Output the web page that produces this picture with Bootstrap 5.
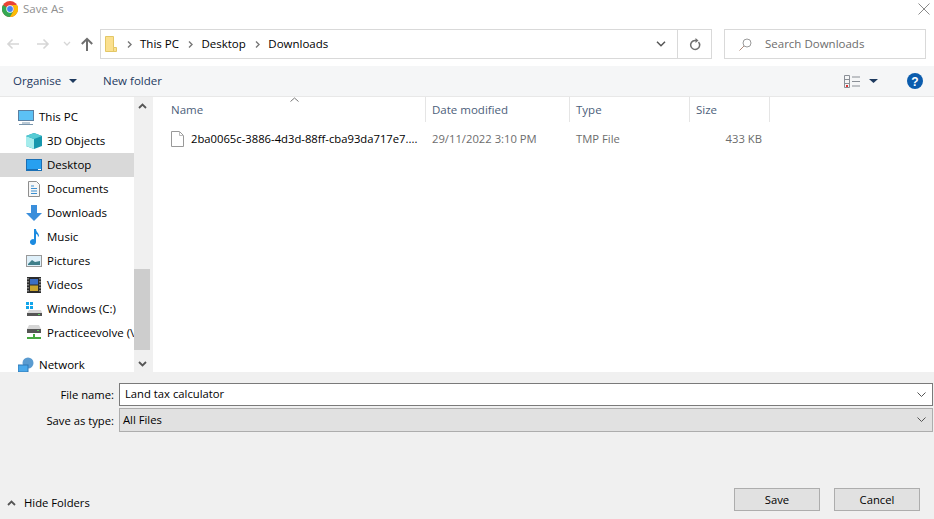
<!doctype html>
<html lang="en"><head><meta charset="utf-8"><title>Save As</title>
<link rel="stylesheet" href="https://cdn.jsdelivr.net/npm/bootstrap@5.3.0/dist/css/bootstrap.min.css">
<style>
html,body{margin:0;height:519px;overflow:hidden;background:#fff}
body{font-family:"Open Sans","Noto Sans","Liberation Sans",sans-serif;font-size:11.5px;line-height:16px;color:#000}
svg{flex:none}
.dlg{width:934px;height:519px}
.ttl{height:29px;padding:0 4px 11px 2px}
.ttl span{color:#8f8f8f;margin-left:5px}
.addr{height:37px;padding-bottom:7px}
.navbtns{width:100px;padding-left:6px}
.chev{margin:0 1px 0 5px}
.crumb{width:578px;height:30px;border:1px solid #d9d9d9;padding:0 7px 0 4px}
.crumb b{font-weight:400;margin:0 9px 0 8px;color:#000}
.crumb b+svg+b{margin-left:8.5px}
.sep1{margin-left:2px}
.helpic{margin-left:29px}
.refresh{width:34px;height:30px;border:1px solid #d9d9d9;border-left:0}
.srch{width:202px;height:30px;border:1px solid #d9d9d9;margin:0 8px 0 12px;padding-left:14px;color:#6d6d6d}
.srch span{margin-left:13px}
.tools{height:31px;background:#f5f6f7;border-bottom:1px solid #e8e8e8;padding:0 11px 0 13px;color:#1e3a5f}
.tools .org{width:90px}
.mainrow{height:275px}
.tree{width:134px;padding-top:8px;overflow:hidden;white-space:nowrap}
.titem{height:24px;padding-left:26px;gap:5px}
.titem.top{padding-left:18px}
.titem.sel{background:#d9d9d9}
.gapfill{height:8px}
.sbar{width:16px;background:#f0f0f0}
.sbtn{height:17px}
.sthumb{height:81px;background:#cdcdcd;margin-top:155px}
.vline{width:3px;background:#f0f0f0;margin-right:12px}
.cols{width:605px}
.hdr{height:25px;color:#4c607a;position:relative}
.hdr>div{padding-left:6px;border-right:1px solid #e5e5e5;height:25px;display:flex;align-items:center}
.c1{width:261px}.c2{width:144px}.c3{width:120px}.c4{width:80px}
.caret{position:absolute;left:125px;top:0}
.frow{height:24px;color:#6d6d6d;margin-top:5px;font-size:11.25px}
.frow .c1{color:#000;white-space:nowrap;overflow:hidden}
.frow>div{padding-left:6px}
.frow .c1 svg{margin-right:7px}
.frow .c4{padding:0 8px 0 0;text-align:right}
.foot{height:147px;background:#f0f0f0;padding-top:11px;font-size:11.25px}
.lab{width:115px;text-align:right;padding:0 1px 1px 0;color:#000}
.fld{width:814px;height:23px;border:1px solid #7a7a7a;background:#fff;padding:0 6px 1px 5px;margin-bottom:2px}
.fld.typ{background:#e1e1e1;border-color:#adadad;padding-left:3px;height:24px}
.bot{margin-top:54px;padding:0 14px 0 7px}
.winbtn{width:86px;height:23px;border:1px solid #adadad;background:#e1e1e1;color:#000;border-radius:0;padding:0;font-size:11.25px;line-height:16px;font-family:inherit}
.bot .gap{gap:14px}
.hide{gap:8px;padding-top:6px}
</style></head><body>
<div class="dlg d-flex flex-column">
 <div class="ttl d-flex align-items-center justify-content-between">
  <div class="d-flex align-items-center">
   <svg width="16" height="16" viewBox="0 0 16 16"><circle cx="8" cy="8" r="8" fill="#ea4335"/><path d="M8 8 1 4A8 8 0 0 0 8 16l3.500-6z" fill="#34a853"/><path d="M8 4h7a8 8 0 0 1-7 12l3.500-6A4 4 0 0 0 8 4z" fill="#fbbc05"/><circle cx="8" cy="8" r="3.700" fill="#fff"/><circle cx="8" cy="8" r="2.900" fill="#4285f4"/></svg>
   <span>Save As</span></div>
  <svg width="12" height="12" viewBox="0 0 12 12"><path d="M.5.500l11 11M11.500.500l-11 11" stroke="#8a8a8a" fill="none"/></svg>
 </div>
 <div class="addr d-flex align-items-center">
  <div class="navbtns d-flex align-items-center">
   <svg width="14" height="12" viewBox="0 0 14 12" class="me-3"><path d="M13 6H2M6.500 1.500 2 6l4.500 4.500" stroke="#d6d6d6" stroke-width="1.600" fill="none"/></svg>
   <svg width="14" height="12" viewBox="0 0 14 12" class="me-2"><path d="M1 6h11M7.500 1.500 12 6l-4.500 4.500" stroke="#d6d6d6" stroke-width="1.600" fill="none"/></svg>
   <svg width="8" height="6" viewBox="0 0 8 6" class="chev"><path d="M1 1l3 3 3-3" stroke="#d6d6d6" stroke-width="1.300" fill="none"/></svg>
   <svg width="14" height="14" viewBox="0 0 14 14" class="ms-2"><path d="M7 14V2M1.800 7 7 1.800 12.200 7" stroke="#6f6f6f" stroke-width="2" fill="none"/></svg>
  </div>
  <div class="crumb d-flex align-items-center">
   <svg width="12" height="16" viewBox="0 0 12 16" class="me-2"><path d="M.5.500h8l0 11h3v4h-11z" fill="#fbe08f" stroke="#e3c766"/><path d="M8.500 11.500v4" stroke="#e3c766"/></svg>
   <svg width="5" height="7" viewBox="0 0 5 7" class="sep1"><path d="M1 .5 4 3.500 1 6.500" stroke="#777" stroke-width="1.400" fill="none"/></svg>
   <b>This PC</b>
   <svg width="5" height="7" viewBox="0 0 5 7"><path d="M1 .5 4 3.500 1 6.500" stroke="#777" stroke-width="1.400" fill="none"/></svg>
   <b>Desktop</b>
   <svg width="5" height="7" viewBox="0 0 5 7"><path d="M1 .5 4 3.500 1 6.500" stroke="#777" stroke-width="1.400" fill="none"/></svg>
   <b>Downloads</b>
   <svg width="10" height="6" viewBox="0 0 10 6" class="ms-auto me-1"><path d="M1 .8 5 4.800 9 .8" stroke="#555" stroke-width="1.500" fill="none"/></svg>
  </div>
  <div class="refresh d-flex align-items-center justify-content-center">
   <svg width="12" height="13" viewBox="0 0 12 13"><path d="M9.500 4A4.500 4.500 0 1 1 6 2.500H7.500" stroke="#6f6f6f" stroke-width="1.500" fill="none"/><path d="M6.500 0v5l3-2.500z" fill="#6f6f6f"/></svg>
  </div>
  <div class="srch d-flex align-items-center">
   <svg width="13" height="13" viewBox="0 0 13 13"><circle cx="8" cy="5" r="4" stroke="#9a9a9a" fill="none"/><path d="M5 8 .5 12.500" stroke="#b08a7a" fill="none"/></svg>
   <span>Search Downloads</span>
  </div>
 </div>
 <div class="tools d-flex align-items-center">
  <div class="org d-flex align-items-center">Organise<svg width="8" height="4" viewBox="0 0 8 4" class="ms-2"><path d="M0 0h8L4 4z" fill="#1e3a5f"/></svg></div>
  <div>New folder</div>
  <div class="ms-auto d-flex align-items-center">
   <svg width="17" height="13" viewBox="0 0 17 13"><path d="M.5.500h5v12h-5zM.5 4.500h5M.5 8.500h5" stroke="#8a8f96" fill="none"/><path d="M8 2h8M8 6.500h8M8 11h8" stroke="#8a8f96" fill="none"/><path d="M2 10h2v2H2z" fill="#d33"/></svg>
   <svg width="9" height="4" viewBox="0 0 9 4" class="ms-2"><path d="M0 0h9L4.500 4z" fill="#1e3a5f"/></svg>
   <svg width="16" height="16" viewBox="0 0 16 16" class="helpic"><circle cx="8" cy="8" r="8" fill="#0b5cad"/><text x="8" y="12.500" text-anchor="middle" font-size="12" font-weight="700" fill="#fff" font-family="Liberation Sans">?</text></svg>
  </div>
 </div>
 <div class="mainrow d-flex">
  <div class="tree">
   <div class="titem top d-flex align-items-center"><svg width="16" height="15" viewBox="0 0 16 15"><rect x=".5" y=".5" width="15" height="10" fill="#5cc1f5" stroke="#5b7fa0"/><path d="M4 13h8M1 14.500h14" stroke="#7a96ad"/></svg>This PC</div>
   <div class="titem d-flex align-items-center"><svg width="16" height="16" viewBox="0 0 16 16"><path d="M8 0l8 3v10l-8 3-8-3V3z" fill="#1797ad"/><path d="M0 3l8 3v10l-8-3z" fill="#a5ecec"/><path d="M8 0l8 3-8 3-8-3z" fill="#56cbd4"/></svg>3D Objects</div>
   <div class="titem sel d-flex align-items-center"><svg width="16" height="12" viewBox="0 0 16 12"><rect width="16" height="12" fill="#1a6fb5"/><rect x="1" y="1" width="14" height="9" fill="#27a0f0"/><path d="M12 10.500h3" stroke="#fff"/></svg>Desktop</div>
   <div class="titem d-flex align-items-center"><svg width="16" height="16" viewBox="0 0 16 16"><path d="M2.500.5h8l3 3v12h-11z" fill="#f6f6f6" stroke="#8e8e8e"/><path d="M5 5h3M5 7.500h6M5 10h6M5 12.500h6" stroke="#3c8fd0"/></svg>Documents</div>
   <div class="titem d-flex align-items-center"><svg width="16" height="16" viewBox="0 0 16 16"><path d="M5 0h6v8h5l-8 8-8-8h5z" fill="#3a8edb"/></svg>Downloads</div>
   <div class="titem d-flex align-items-center"><svg width="16" height="16" viewBox="0 0 16 16"><path d="M8 0h2c0 3 3 4 3 7l-1 1c0-2-1-3-2-3v8a3 3 0 1 1-2-2.800z" fill="#1c8be0"/></svg>Music</div>
   <div class="titem d-flex align-items-center"><svg width="16" height="12" viewBox="0 0 16 12"><rect x=".5" y=".5" width="15" height="11" fill="#dff0fa" stroke="#999"/><path d="M2 9l4-4 3 2 5-1v4H2z" fill="#3f7f8a"/></svg>Pictures</div>
   <div class="titem d-flex align-items-center"><svg width="16" height="16" viewBox="0 0 16 16"><rect x="1" width="14" height="16" fill="#2b2b2b"/><path d="M2 1v14M14 1v14" stroke="#999" stroke-dasharray="1.500 1.500" stroke-width="1.500"/><rect x="4" y="2" width="8" height="5.500" fill="#3d6fc4"/><rect x="4" y="8.500" width="8" height="5.500" fill="#c9a530"/></svg>Videos</div>
   <div class="titem d-flex align-items-center"><svg width="16" height="16" viewBox="0 0 16 16"><path d="M0 1h3v3H0zM4 1h3v3H4zM0 5h3v3H0zM4 5h3v3H4z" fill="#12a5ea"/><path d="M3 9h12l1 3v3H1v-3z" fill="#d6d6d6"/><rect x="1" y="12" width="15" height="3" fill="#555"/><rect x="12" y="13" width="2" height="1" fill="#5fd35f"/></svg>Windows (C:)</div>
   <div class="titem d-flex align-items-center"><svg width="16" height="16" viewBox="0 0 16 16"><path d="M3 0h10l2 4v4H1V4z" fill="#d6d6d6"/><rect x="1" y="4" width="14" height="4" fill="#555"/><rect x="11" y="5" width="2" height="1" fill="#5fd35f"/><path d="M7 9h2v3h6v2H1v-2h6z" fill="#46a83f"/></svg>Practiceevolve (\</div>
   <div class="gapfill"></div>
   <div class="titem top d-flex align-items-center"><svg width="16" height="16" viewBox="0 0 16 16"><circle cx="10" cy="6" r="5.500" fill="#5a9bd0"/><rect y="8" width="10" height="7" fill="#4aa8ea" stroke="#2f79b5"/></svg>Network</div>
  </div>
  <div class="sbar d-flex flex-column">
   <div class="sbtn d-flex align-items-center justify-content-center"><svg width="9" height="6" viewBox="0 0 9 6"><path d="M1 5l3.500-3.500L8 5" stroke="#555" stroke-width="1.800" fill="none"/></svg></div>
   <div class="sthumb"></div>
   <div class="sbtn mt-auto d-flex align-items-center justify-content-center"><svg width="9" height="6" viewBox="0 0 9 6"><path d="M1 1l3.500 3.500L8 1" stroke="#555" stroke-width="1.800" fill="none"/></svg></div>
  </div>
  <div class="vline"></div>
  <div class="cols">
   <div class="hdr d-flex"><svg class="caret" width="9" height="5" viewBox="0 0 9 5"><path d="M.5 4.500 4.500 1l4 3.500" stroke="#777" fill="none"/></svg>
    <div class="c1">Name</div><div class="c2">Date modified</div><div class="c3">Type</div><div class="c4">Size</div></div>
   <div class="frow d-flex align-items-center">
    <div class="c1 d-flex align-items-center"><svg width="13" height="16" viewBox="0 0 13 16"><path d="M.5.500h8l4 4v11H.5z" fill="#fff" stroke="#999"/><path d="M8.500.500v4h4" fill="none" stroke="#bbb"/></svg>2ba0065c-3886-4d3d-88ff-cba93da717e7....</div>
    <div class="c2">29/11/2022 3:10 PM</div><div class="c3">TMP File</div><div class="c4">433 KB</div>
   </div>
  </div>
 </div>
 <div class="foot flex-grow-1">
  <div class="d-flex align-items-center"><div class="lab">File name:</div><div class="fld d-flex align-items-center ms-1 justify-content-between"><span>Land tax calculator</span><svg width="9" height="5" viewBox="0 0 9 5"><path d="M.5.500l4 4 4-4" stroke="#555" fill="none"/></svg></div></div>
  <div class="d-flex align-items-center"><div class="lab">Save as type:</div><div class="fld typ d-flex align-items-center ms-1 justify-content-between"><span>All Files</span><svg width="9" height="5" viewBox="0 0 9 5"><path d="M.5.500l4 4 4-4" stroke="#555" fill="none"/></svg></div></div>
  <div class="bot d-flex justify-content-between align-items-center">
   <div class="hide d-flex align-items-center"><svg width="9" height="6" viewBox="0 0 9 6"><path d="M1 5l3.500-3.500L8 5" stroke="#555" stroke-width="1.800" fill="none"/></svg>Hide Folders</div>
   <div class="gap d-flex"><button class="btn winbtn">Save</button><button class="btn winbtn">Cancel</button></div>
  </div>
 </div>
</div>
</body></html>
